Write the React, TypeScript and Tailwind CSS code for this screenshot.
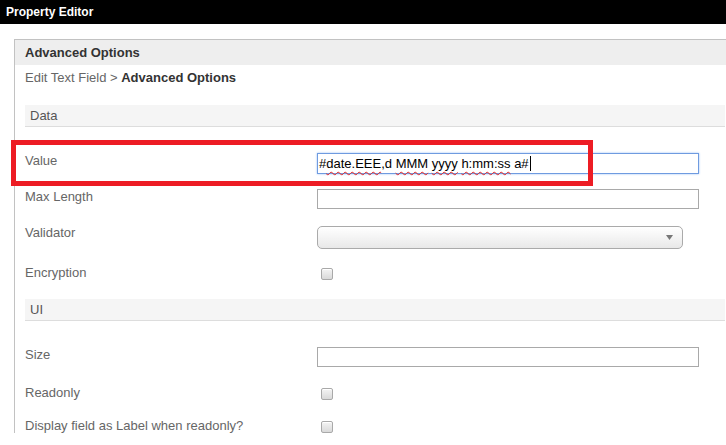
import React from 'react';

const font = { fontFamily: '"Liberation Sans", Arial, sans-serif' };

function Checkbox() {
  return (
    <span className="mt-[3px] ml-[4px] block h-[12px] w-[12px] rounded-[2px] border border-[#a9a9a9] bg-gradient-to-b from-[#f4f4f4] to-[#d9d9d9] shadow-[inset_0_1px_0_#fff]" />
  );
}

function TextBox({ focused, children }: { focused?: boolean; children?: React.ReactNode }) {
  return (
    <div
      className={
        'flex w-[382px] items-center px-[1px] text-[13px] text-black ' +
        (focused
          ? 'h-[21px] border border-[#6f9be0] shadow-[0_0_2px_#9cc1f5]'
          : 'h-[20px] border border-[#a9a9a9]')
      }
    >
      {children}
    </div>
  );
}

function Select() {
  return (
    <div className="flex h-[23px] w-[366px] items-center justify-end rounded-[5px] border border-[#aaa] bg-gradient-to-b from-[#ffffff] via-[#f4f4f4] to-[#e8e8e8] pr-[9px]">
      <svg width="7" height="5" viewBox="0 0 7 5">
        <path d="M0 0h7L3.5 5z" fill="#777" />
      </svg>
    </div>
  );
}

function Row({ label, mt, children }: { label: string; mt: string; children: React.ReactNode }) {
  return (
    <div className={'flex items-start ' + mt}>
      <div className="w-[292px] text-[13px] leading-[15px] text-[#666]">{label}</div>
      {children}
    </div>
  );
}

function SectionHeader({ title, mt }: { title: string; mt: string }) {
  return (
    <div className={'mr-[1px] flex h-[22px] items-center border-b border-[#dddddd] bg-[#f5f5f5] pl-[5px] text-[13px] text-[#555] ' + mt}>
      {title}
    </div>
  );
}

const wavy = 'underline decoration-wavy decoration-[#e02020] decoration-1 underline-offset-[3px]';

export default function App() {
  return (
    <div className="relative h-[445px] w-[726px] overflow-hidden bg-white" style={font}>
      {/* Title bar */}
      <div className="flex h-[24px] items-center bg-black pl-[6px] text-[12px] font-bold text-white">
        Property Editor
      </div>

      <div className="pt-[15px] pl-[14px]">
        <div className="border-t border-l border-[#c2c2c2]">
          <div className="flex h-[25px] items-center bg-[#eeeeee] pl-[10px] text-[13px] font-bold text-[#333]">
            Advanced Options
          </div>

          <div className="pl-[10px]">
            <div className="mt-[5px] text-[13px] leading-[15px] text-[#666]">
              Edit Text Field &gt; <span className="font-bold text-[#333]">Advanced Options</span>
            </div>

            <SectionHeader title="Data" mt="mt-[20px]" />

            <Row label="Value" mt="mt-[26px]">
              <TextBox focused>
                <span>
                  #<span className={wavy}>date.EEE</span>,d <span className={wavy}>MMM</span>{' '}
                  <span className={wavy}>yyyy</span> <span className={wavy}>h:mm:ss</span> a#
                </span>
                <span className="ml-[1px] inline-block h-[15px] w-[1px] bg-black" />
              </TextBox>
            </Row>

            <Row label="Max Length" mt="mt-[15px]">
              <TextBox />
            </Row>

            <Row label="Validator" mt="mt-[16px]">
              <div className="mt-[1px]">
                <Select />
              </div>
            </Row>

            <Row label="Encryption" mt="mt-[16px]">
              <Checkbox />
            </Row>

            <SectionHeader title="UI" mt="mt-[19px]" />

            <Row label="Size" mt="mt-[26px]">
              <TextBox />
            </Row>

            <Row label="Readonly" mt="mt-[18px]">
              <Checkbox />
            </Row>

            <Row label="Display field as Label when readonly?" mt="mt-[18px]">
              <Checkbox />
            </Row>
          </div>
        </div>
      </div>

      {/* annotation box */}
      <div className="pointer-events-none absolute top-[140px] left-[11px] h-[46px] w-[582px] border-[5px] border-[#ed1c24]" />
    </div>
  );
}
